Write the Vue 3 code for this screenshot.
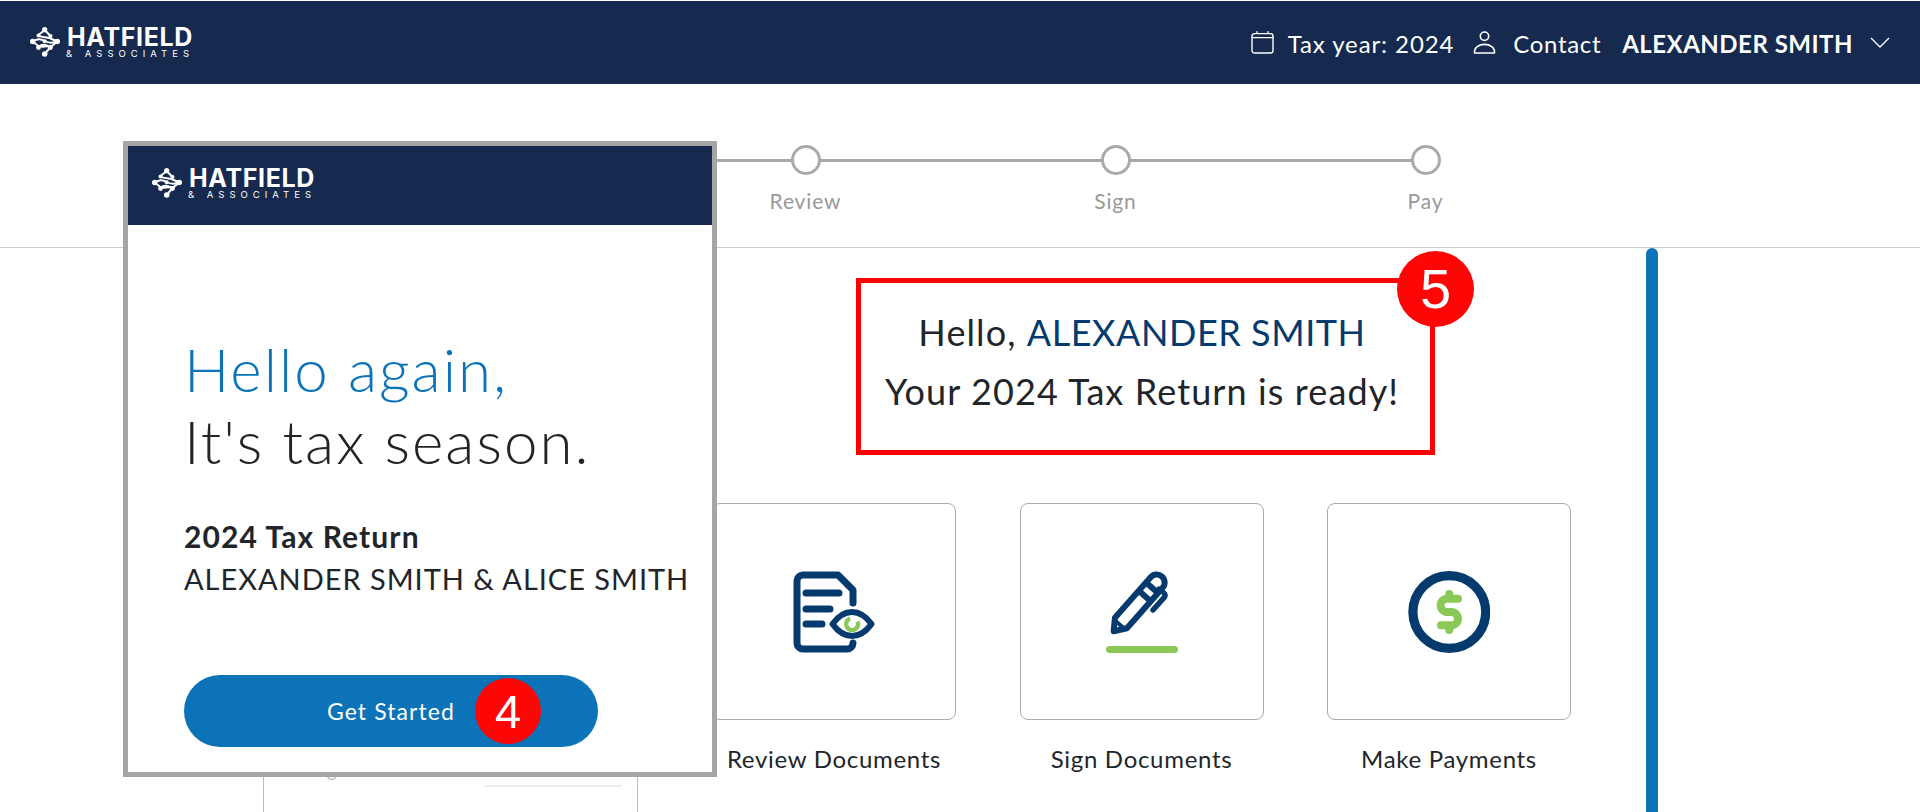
<script setup>
const steps = [
  { label: '' },
  { label: 'Review' },
  { label: 'Sign' },
  { label: 'Pay' },
]
</script>

<template>
  <div class="page">
    <header class="topbar">
      <div class="logo">
        <svg class="logo-mark" viewBox="0 0 30 30" aria-hidden="true">
          <g fill="none" stroke="#fff" stroke-width="2" stroke-linecap="round" stroke-linejoin="round">
            <path d="M14.7 3 L8.5 8 C11 11.5 17 9 20.5 11.5 L27.5 14.5" />
            <path d="M20.5 9 L14.7 3" />
            <path d="M2.5 14.5 C7 12 10 11 14.7 14 C18 16 23 16 27.5 14.5" />
            <path d="M2.5 14.5 L8.5 19 C12 21 17 18 20.5 20 L27.5 14.5" />
            <path d="M8.5 20.5 C11 17 14 17 20.5 20 L14.7 27" />
          </g>
          <g fill="#fff">
            <circle cx="14.7" cy="2.7" r="2.6" />
            <circle cx="8.5" cy="8.5" r="2" />
            <circle cx="20.5" cy="9" r="2" />
            <circle cx="2.7" cy="14.5" r="2.7" />
            <circle cx="14.7" cy="14.3" r="2" />
            <circle cx="27.3" cy="14.5" r="2.7" />
            <circle cx="8.5" cy="20.5" r="2.4" />
            <circle cx="20.5" cy="20.5" r="2.4" />
            <circle cx="14.7" cy="27" r="2.8" />
          </g>
        </svg>
        <div class="logo-text">
          <span class="logo-name">HATFIELD</span>
          <span class="logo-sub">&amp; ASSOCIATES</span>
        </div>
      </div>
      <nav class="topnav">
        <span class="nav-item">
          <svg class="nav-icon" viewBox="0 0 23 23" aria-hidden="true">
            <g fill="none" stroke="#fff" stroke-width="1.4" stroke-linecap="round">
              <rect x="1" y="2.6" width="21" height="19.4" rx="2.6" />
              <path d="M1 6.6 H22 M6 .8 V2.6 M17 .8 V2.6" />
            </g>
          </svg>
          <span class="nav-text">Tax year: 2024</span>
        </span>
        <span class="nav-item nav-contact">
          <svg class="nav-icon" viewBox="0 0 23 23" aria-hidden="true">
            <g fill="none" stroke="#fff" stroke-width="1.6" stroke-linejoin="round">
              <circle cx="11.5" cy="5.2" r="4.2" />
              <path d="M1.5 22 C1 16.5 6 13.4 11.5 13.4 C17 13.4 22 16.5 21.5 22 Z" />
            </g>
          </svg>
          <span class="nav-text">Contact</span>
        </span>
        <span class="nav-user nav-text">ALEXANDER SMITH</span>
        <svg class="nav-chevron" viewBox="0 0 20 11" aria-hidden="true">
          <path d="M1 1 L10 10 L19 1" fill="none" stroke="#fff" stroke-width="1.3" />
        </svg>
      </nav>
    </header>

    <section class="stepper">
      <div v-for="(step, i) in steps" :key="i" class="step" :class="{ 'step-last': i === steps.length - 1 }">
        <span class="dot"></span>
        <span class="step-label">{{ step.label }}</span>
      </div>
    </section>

    <main class="main">
      <aside class="side-card">
        <div class="side-row">
          <span class="side-label">Filing</span>
          <span class="side-line"></span>
        </div>
      </aside>

      <div class="content">
        <div class="greeting">
          <p>Hello, <span class="name">ALEXANDER SMITH</span></p>
          <p>Your 2024 Tax Return is ready!</p>
          <span class="badge badge-five">5</span>
        </div>

        <div class="tiles">
          <div class="tile">
            <div class="tile-box">
              <svg class="tile-icon" viewBox="93 82 82 82" aria-hidden="true">
                <g fill="none" stroke="#053a6e" stroke-width="7" stroke-linecap="round" stroke-linejoin="round">
                  <path d="M153 114 V101 L138 86 H103 a6 6 0 0 0 -6 6 V154 a6 6 0 0 0 6 6 H147 a6 6 0 0 0 6 -6" />
                  <path d="M106 104 H139 M106 120 H130 M106 135 H122" />
                </g>
                <path d="M132.5 135 C139 126 146 123 152 123 C158 123 165 126 171.5 135 C165 144 158 147 152 147 C146 147 139 144 132.5 135 Z" fill="#fff" stroke="#053a6e" stroke-width="6" stroke-linejoin="round" />
                <path d="M150 129.5 A6 6 0 1 0 157.5 132.5" fill="none" stroke="#8ac858" stroke-width="4.4" />
              </svg>
            </div>
            <span class="tile-label">Review Documents</span>
          </div>

          <div class="tile">
            <div class="tile-box">
              <svg class="tile-icon" viewBox="91 81 82 82" aria-hidden="true">
                <g transform="translate(103 142) rotate(-48.6)" fill="none" stroke="#053a6e" stroke-width="6" stroke-linejoin="round">
                  <path d="M1 0 L12 -8 H66 A8 8 0 0 1 66 8 H12 Z" />
                  <path d="M10 -8 V8" stroke-width="4" />
                  <path d="M48 -8 V8" stroke-width="6" />
                  <path d="M59 -8 V8" stroke-width="6" />
                </g>
                <path d="M149 99 L154 103 a3.5 3.5 0 0 1 .3 4.4 L143 120" fill="none" stroke="#053a6e" stroke-width="5.4" stroke-linecap="round" stroke-linejoin="round" />
                <path d="M99.5 159.5 H164.5" fill="none" stroke="#8ac858" stroke-width="7" stroke-linecap="round" />
              </svg>
            </div>
            <span class="tile-label">Sign Documents</span>
          </div>

          <div class="tile">
            <div class="tile-box">
              <svg class="tile-icon" viewBox="88 81 82 82" aria-hidden="true">
                <circle cx="129.3" cy="122" r="36.4" fill="none" stroke="#053a6e" stroke-width="9.2" />
                <path d="M138 108.7 H127.3 a6.65 6.65 0 0 0 0 13.3 H131.3 a6.65 6.65 0 0 1 0 13.3 H121 M129.3 104 V108.7 M129.3 135.3 V140" fill="none" stroke="#8ac858" stroke-width="8" stroke-linecap="round" />
              </svg>
            </div>
            <span class="tile-label">Make Payments</span>
          </div>
        </div>
      </div>

      <div class="scroll-thumb"></div>
    </main>

    <div class="modal">
      <div class="modal-head">
        <div class="logo">
          <svg class="logo-mark" viewBox="0 0 30 30" aria-hidden="true">
            <g fill="none" stroke="#fff" stroke-width="2" stroke-linecap="round" stroke-linejoin="round">
              <path d="M14.7 3 L8.5 8 C11 11.5 17 9 20.5 11.5 L27.5 14.5" />
              <path d="M20.5 9 L14.7 3" />
              <path d="M2.5 14.5 C7 12 10 11 14.7 14 C18 16 23 16 27.5 14.5" />
              <path d="M2.5 14.5 L8.5 19 C12 21 17 18 20.5 20 L27.5 14.5" />
              <path d="M8.5 20.5 C11 17 14 17 20.5 20 L14.7 27" />
            </g>
            <g fill="#fff">
              <circle cx="14.7" cy="2.7" r="2.6" />
              <circle cx="8.5" cy="8.5" r="2" />
              <circle cx="20.5" cy="9" r="2" />
              <circle cx="2.7" cy="14.5" r="2.7" />
              <circle cx="14.7" cy="14.3" r="2" />
              <circle cx="27.3" cy="14.5" r="2.7" />
              <circle cx="8.5" cy="20.5" r="2.4" />
              <circle cx="20.5" cy="20.5" r="2.4" />
              <circle cx="14.7" cy="27" r="2.8" />
            </g>
          </svg>
          <div class="logo-text">
            <span class="logo-name">HATFIELD</span>
            <span class="logo-sub">&amp; ASSOCIATES</span>
          </div>
        </div>
      </div>
      <div class="modal-body">
        <h1 class="modal-title">
          <span class="title-blue">Hello again,</span>
          <span>It's tax season.</span>
        </h1>
        <p class="modal-return">2024 Tax Return</p>
        <p class="modal-names">ALEXANDER SMITH &amp; ALICE SMITH</p>
        <button class="cta" type="button">
          Get Started
          <span class="badge badge-four">4</span>
        </button>
      </div>
    </div>
  </div>
</template>

<style>
html, body { margin: 0; overflow: hidden; background: #fff; }
</style>

<style scoped>
.page {
  position: relative;
  width: 1920px;
  height: 812px;
  overflow: hidden;
  background: #fff;
  color: #212529;
  font-family: Lato, "Noto Sans", sans-serif;
}
.topbar {
  box-sizing: border-box;
  height: 83px;
  margin-top: 1px;
  padding: 0 30px;
  display: flex;
  align-items: center;
  justify-content: space-between;
  background: #152a4e;
  color: #fff;
}
.logo { display: flex; align-items: flex-start; gap: 7px; }
.topbar .logo { padding-top: 1px; }
.logo-mark { width: 30px; height: 30px; flex: none; }
.logo-text { display: flex; flex-direction: column; color: #fff; }
.logo-name {
  font: 700 25px/20px Inter, sans-serif;
  letter-spacing: 0.65px;
}
.logo-sub {
  margin: 2px 0 0 -1px;
  font: 400 9.5px/10px Inter, sans-serif;
  letter-spacing: 5px;
  white-space: nowrap;
}
.topnav { display: flex; align-items: center; font-size: 24px; }
.nav-text { padding-top: 2px; }
.nav-item { display: flex; align-items: center; gap: 14px; letter-spacing: 0.9px; }
.nav-contact { margin-left: 19px; gap: 17px; letter-spacing: 0.65px; }
.nav-icon { width: 23px; height: 23px; flex: none; }
.nav-user { margin-left: 21px; font-weight: 700; letter-spacing: 0.5px; }
.nav-chevron { width: 20px; height: 11px; margin-left: 17px; }

.stepper {
  box-sizing: border-box;
  height: 164px;
  padding: 61px 0 0 340.5px;
  display: flex;
  border-bottom: 1px solid #ccc;
}
.step {
  position: relative;
  width: 310px;
  display: flex;
  flex-direction: column;
  align-items: center;
}
.step::after {
  content: "";
  position: absolute;
  top: 14px;
  left: 50%;
  width: 100%;
  height: 3px;
  background: #a7a9ac;
}
.step-last::after { display: none; }
.dot {
  position: relative;
  z-index: 1;
  box-sizing: border-box;
  width: 30px;
  height: 30px;
  border: 3px solid #a7a9ac;
  border-radius: 50%;
  background: #fff;
}
.step-label {
  margin-top: 13px;
  font-size: 21px;
  line-height: 26px;
  letter-spacing: 0.85px;
  color: #999;
}

.main {
  position: relative;
  height: 564px;
  padding-left: 263px;
  display: flex;
  overflow: hidden;
}
.side-card {
  box-sizing: border-box;
  width: 375px;
  height: 400px;
  margin-top: 230px;
  padding: 278px 15px 0 30px;
  border: 1px solid #bbb;
  flex: none;
}
.side-row { display: flex; justify-content: space-between; align-items: flex-start; height: 40px; }
.side-label { font-size: 18px; line-height: 26px; color: #bbb; }
.side-line { width: 138px; margin-top: 28px; border-bottom: 2px solid #eee; }
.content { width: 858px; margin-left: 74px; flex: none; }
.greeting {
  position: relative;
  box-sizing: border-box;
  width: 579px;
  height: 177px;
  margin: 30px 0 48px 144px;
  padding: 20px 7px 0 0;
  border: 5px solid #f00;
  text-align: center;
  font-size: 36px;
  line-height: 59px;
  letter-spacing: 1.1px;
}
.greeting p { margin: 0; }
.name { color: #053a6e; letter-spacing: 0.55px; }
.tiles { display: flex; gap: 63.5px; }
.tile { width: 244px; display: flex; flex-direction: column; align-items: center; }
.tile-box {
  box-sizing: border-box;
  width: 244px;
  height: 217px;
  display: flex;
  align-items: center;
  justify-content: center;
  border: 1px solid #aaa;
  border-radius: 8px;
}
.tile-icon { width: 82px; height: 82px; }
.tile-label {
  margin-top: 23px;
  font-size: 24px;
  line-height: 32px;
  letter-spacing: 0.7px;
  white-space: nowrap;
}
.scroll-thumb {
  position: absolute;
  left: 1646px;
  top: 0;
  bottom: 0;
  width: 12px;
  border-radius: 6px 6px 0 0;
  background: #0c73b8;
}

.modal {
  position: absolute;
  z-index: 2;
  left: 123px;
  top: 141px;
  box-sizing: border-box;
  width: 594px;
  height: 636px;
  border: 5px solid #a5a5a5;
  background: #fff;
}
.modal-head {
  box-sizing: border-box;
  height: 79px;
  padding: 22px 0 0 24px;
  background: #152a4e;
}
.modal-body { padding: 108px 0 0 56px; }
.modal-title {
  margin: 0;
  font-size: 60px;
  line-height: 72px;
  font-weight: 300;
  letter-spacing: 2px;
  color: #212529;
}
.modal-title span { display: block; }
.title-blue { color: #0c73b8; }
.modal-return {
  margin: 39px 0 0;
  font-size: 30px;
  line-height: 41px;
  font-weight: 700;
  letter-spacing: 1.1px;
}
.modal-names {
  margin: 1px 0 0;
  font-size: 29px;
  line-height: 41px;
  letter-spacing: 0.97px;
  white-space: nowrap;
}
.cta {
  position: relative;
  display: block;
  box-sizing: border-box;
  width: 414px;
  height: 72px;
  margin: 76px 0 0;
  padding: 0;
  border: 0;
  border-radius: 36px;
  background: #0c73b8;
  color: #fff;
  font: 400 23px Lato, "Noto Sans", sans-serif;
  letter-spacing: 1.1px;
}
.badge {
  position: absolute;
  display: flex;
  align-items: center;
  justify-content: center;
  border-radius: 50%;
  background: #fc0606;
  color: #fff;
  font-family: "Liberation Sans", Arial, sans-serif;
  letter-spacing: 0;
}
.badge-four { left: 291px; top: 3px; width: 66px; height: 66px; font-size: 47px; }
.badge-five { right: -44px; top: -32px; width: 77px; height: 76px; font-size: 56px; line-height: 76px; }
</style>
